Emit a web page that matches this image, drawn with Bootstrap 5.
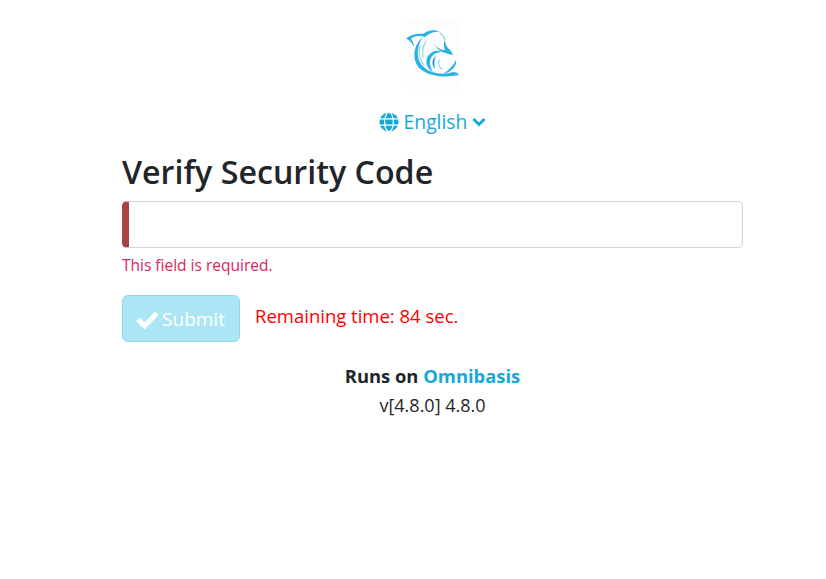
<!DOCTYPE html>
<html lang="en">
<head>
<meta charset="utf-8">
<title>Verify Security Code</title>
<link href="https://cdn.jsdelivr.net/npm/bootstrap@5.3.0/dist/css/bootstrap.min.css" rel="stylesheet">
<style>
body { font-family: "Open Sans", "Noto Sans", sans-serif; font-size: 18px; color: #212529; background: #fff; }
.shell { width: 621px; margin-left: 122px; padding-top: 20px; }
.logo-box { width: 54px; height: 70px; background: #fbfdfe; display: block; margin: 0 auto; }
.lang-link { color: #16a9d8; font-size: 19.3px; line-height: 28px; text-decoration: none; margin-top: 18px; gap: 5px; }
.page-title { font-size: 32.2px; font-weight: 600; line-height: 40px; margin: 16px 0 9px; }
.code-input { height: 47px; border: 1px solid #d3d3d3; border-left: 7px solid #a94442; border-radius: 5px; }
.err-text { color: #e0245e; font-size: 15.5px; line-height: 20px; margin-top: 7px; }
.send-btn { width: 118px; height: 47px; font-size: 19px; gap: 3px; padding: 2px 1px 0 0; }
.btn.send-btn:disabled { background: #ace6f5; border: 1px solid #90d8ec; color: #fff; opacity: 1; }
.time-text { color: #f00; font-size: 18.5px; margin-bottom: 6px; margin-left: -1px; }
.runs-on { font-weight: 700; font-size: 18.4px; line-height: 30px; margin-top: 19px; }
.runs-on a { color: #16a9d8; text-decoration: none; }
.ver-text { font-size: 18px; line-height: 28px; }
</style>
</head>
<body>
<div class="shell">
  <svg class="logo-box" viewBox="0 0 54 70" role="img" aria-label="Logo">
    <defs><filter id="soft" x="-10%" y="-10%" width="120%" height="120%"><feGaussianBlur stdDeviation="0.6"/></filter></defs>
    <g filter="url(#soft)" fill="#2bb0e2">
      <path d="M0 18.5 C5 14 12 13 17 14 C22 10 29 9 34 12 C29 11 23 13 19 17 C13 15 7 16 5 19 C7 21 8 24 8 27 C6 23 4 20 0 18.5Z"/>
      <path d="M17 17 C8 24 6 37 11 45 C17 54 31 59 53 55 C52 53 50 52 47 52 C35 56 22 53 15 44 C10 37 11 25 17 17Z"/>
      <path d="M39 20 C39 24 41 28 45 31 L47 35 C43 34 37 33 33 30 C31 28 29 26 28 24 C31 28 35 30 39 30 C38 27 37 23 39 20Z"/>
      <path d="M36 32 C30 29 24 32 21 38 C19 44 22 49 27 52 C24 47 23 42 25 38 C27 34 31 32 36 32Z"/>
      <path d="M30 36 C26 39 25 44 29 49 C28 44 28 40 30 36Z" fill="#1b9ed6"/>
      <path d="M50 40 C51 46 46 52 37 54 C43 50 47 46 50 40Z"/>
      <g fill="none" stroke="#8fd5ef" stroke-linecap="round" stroke-width="1.2">
        <path d="M14 26 C12 33 14 40 18 45"/>
        <path d="M20 21 C17 26 16 32 17 37"/>
        <path d="M34 13 C37 15 38 17 39 20"/>
        <path d="M33 40 C32 44 33 47 36 49"/>
      </g>
    </g>
  </svg>
  <a href="#" class="lang-link d-flex justify-content-center align-items-center">
    <svg width="20" height="20" viewBox="0 0 20 20" fill="none" aria-hidden="true">
      <circle cx="10" cy="10" r="9.6" fill="#16a9d8"/>
      <ellipse cx="10" cy="10" rx="4.4" ry="9.6" stroke="#fff" stroke-width="1.2"/>
      <path d="M.6 6.8H19.4M.6 13.2H19.4" stroke="#fff" stroke-width="1.2"/>
    </svg>
    <span>English</span>
    <svg width="14" height="10" viewBox="0 0 14 10" fill="none" stroke="#16a9d8" stroke-width="3" aria-hidden="true"><path d="M1.5 2 7 7.5 12.5 2"/></svg>
  </a>
  <h1 class="page-title">Verify Security Code</h1>
  <div class="code-input bg-white"></div>
  <div class="err-text">This field is required.</div>
  <div class="d-flex align-items-center gap-3 mt-3 pt-1">
    <button type="button" class="btn send-btn d-inline-flex align-items-center justify-content-center" disabled>
      <svg width="23" height="19" viewBox="0 0 23 19" fill="none" stroke="#fff" stroke-width="5" aria-hidden="true"><path d="M2 9.5 8.5 16 21 3"/></svg>
      <span>Submit</span>
    </button>
    <span class="time-text">Remaining time: 84 sec.</span>
  </div>
  <div class="text-center runs-on">Runs on <a href="#">Omnibasis</a></div>
  <div class="text-center ver-text">v[4.8.0] 4.8.0</div>
</div>
</body>
</html>
